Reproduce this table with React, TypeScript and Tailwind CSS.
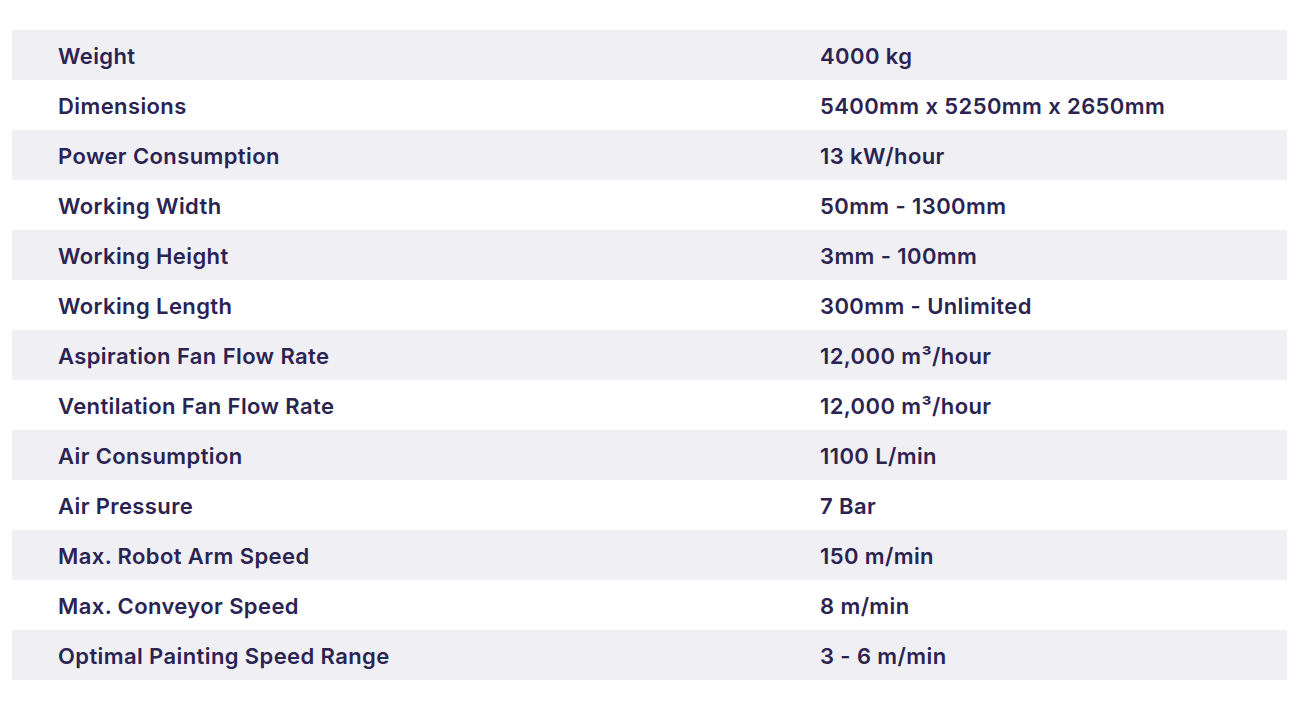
import React from 'react';

const SPECS: [string, React.ReactNode][] = [
  ['Weight', '4000 kg'],
  ['Dimensions', '5400mm x 5250mm x 2650mm'],
  ['Power Consumption', '13 kW/hour'],
  ['Working Width', '50mm - 1300mm'],
  ['Working Height', '3mm - 100mm'],
  ['Working Length', '300mm - Unlimited'],
  ['Aspiration Fan Flow Rate', <>12,000 m³/hour</>],
  ['Ventilation Fan Flow Rate', <>12,000 m³/hour</>],
  ['Air Consumption', '1100 L/min'],
  ['Air Pressure', '7 Bar'],
  ['Max. Robot Arm Speed', '150 m/min'],
  ['Max. Conveyor Speed', '8 m/min'],
  ['Optimal Painting Speed Range', '3 - 6 m/min'],
];

export default function App() {
  return (
    <div className="min-h-screen bg-white pt-[30px] pl-[12px] pr-[12px] font-['Inter',sans-serif]">
      <div className="w-[1275px]">
        {SPECS.map(([label, value], i) => (
          <div
            key={label}
            className={`flex h-[50px] items-center pt-[2px] text-[22px] font-semibold tracking-[0.4px] text-[#2b2352] ${i % 2 === 0 ? 'bg-[#f0f0f4]' : 'bg-white'}`}
          >
            <div className="w-[808px] pl-[46px]">{label}</div>
            <div className="flex-1">{value}</div>
          </div>
        ))}
      </div>
    </div>
  );
}
